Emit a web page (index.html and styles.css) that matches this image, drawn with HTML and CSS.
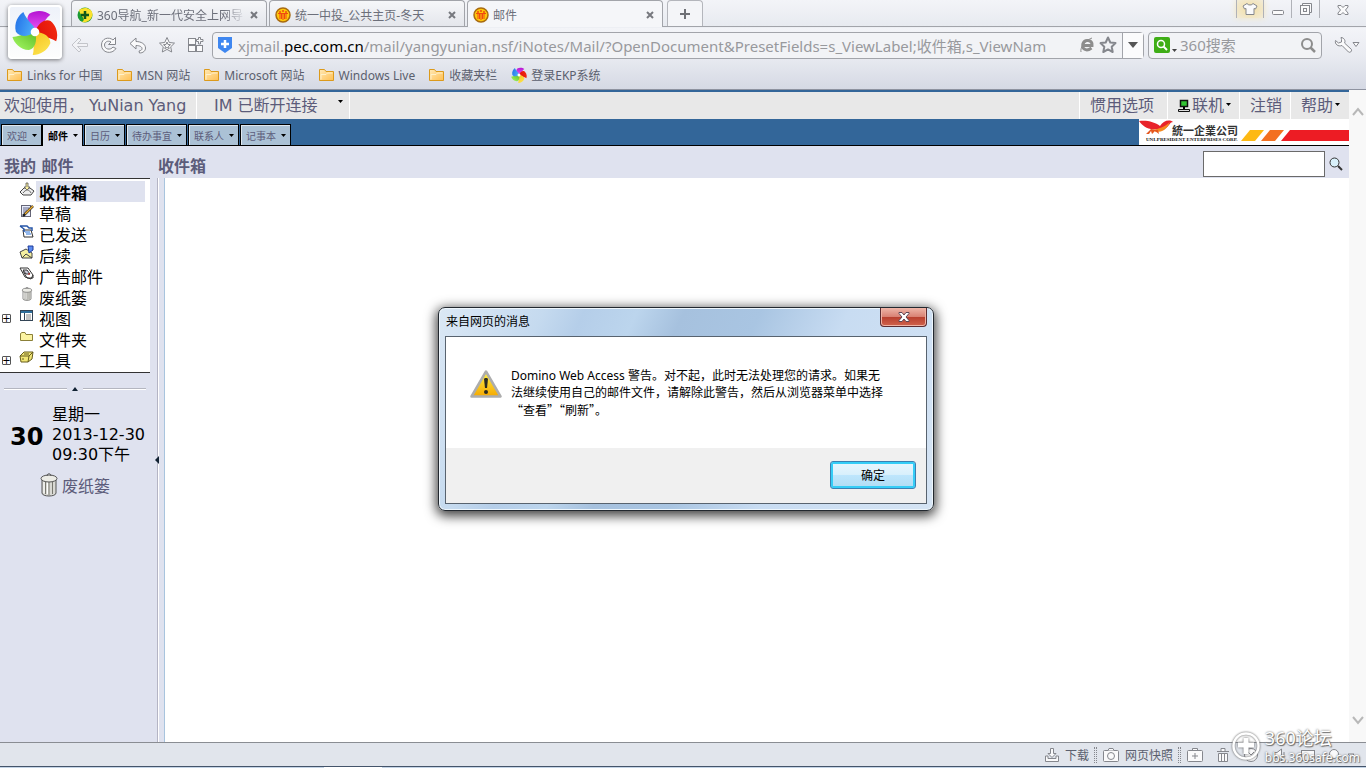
FILE: index.html
```html
<!DOCTYPE html>
<html lang="zh-CN">
<head>
  <meta charset="UTF-8">
  <meta name="viewport" content="width=device-width, initial-scale=1.0">
  <title>邮件</title>
  <link rel="stylesheet" href="styles.css">
</head>
<body>
  <!-- shared icons -->
  <svg class="defs" width="0" height="0">
    <defs>
      <path id="petal" d="M0 0C-8 -6 -10 -14 -6 -19C2 -24 11 -22 16 -18C12 -15 9 -10 5 -3Z"/>
      <linearGradient id="folderFill" x1="0" y1="0" x2="1" y2="1">
        <stop offset="0" stop-color="#ffe9b5"/><stop offset="1" stop-color="#ffbf52"/>
      </linearGradient>
      <linearGradient id="warnFill" x1="0" y1="0" x2="0" y2="1">
        <stop offset="0" stop-color="#fff34a"/><stop offset="1" stop-color="#f5a800"/>
      </linearGradient>
      <linearGradient id="purple" x1="0" y1="0" x2="0" y2="1"><stop offset="0" stop-color="#b414d2"/><stop offset="1" stop-color="#ec5cf6"/></linearGradient>
      <linearGradient id="red" x1="0" y1="0" x2="0" y2="1"><stop offset="0" stop-color="#f0260e"/><stop offset="1" stop-color="#e0100a"/></linearGradient>
      <linearGradient id="yellow" x1="0" y1="0" x2="0" y2="1"><stop offset="0" stop-color="#fbe04a"/><stop offset="1" stop-color="#f7c21e"/></linearGradient>
      <linearGradient id="green" x1="0" y1="0" x2="0" y2="1"><stop offset="0" stop-color="#96ec58"/><stop offset="1" stop-color="#62bf28"/></linearGradient>
      <linearGradient id="blue" x1="0" y1="0" x2="0" y2="1"><stop offset="0" stop-color="#2878ea"/><stop offset="1" stop-color="#4fb2fb"/></linearGradient>
      <symbol id="folder" viewBox="0 0 16 14">
        <path d="M.5 12.500V1.500H5.500L7 3.500H14.500V12.500Z" fill="url(#folderFill)" stroke="#dc9a1c"/>
        <path d="M2 11.500V6.500H7L8.500 5H13.500" fill="none" stroke="#fff0c8"/>
      </symbol>
      <symbol id="pinwheel" viewBox="-24 -24 48 48">
        <use href="#petal" fill="url(#purple)"/>
        <use href="#petal" fill="url(#red)" transform="rotate(72)"/>
        <use href="#petal" fill="url(#yellow)" transform="rotate(144)"/>
        <use href="#petal" fill="url(#green)" transform="rotate(216)"/>
        <use href="#petal" fill="url(#blue)" transform="rotate(288)"/>
        <circle r="4.500" fill="#fff"/>
      </symbol>
      <symbol id="people" viewBox="0 0 16 16">
        <circle cx="8" cy="8" r="7" fill="#ffc60a" stroke="#a86a10" stroke-width="1.500"/>
        <path d="M3 6.500H13M5 7V12M8 7V13M11 7V12M6.500 7V12M9.500 7V12" stroke="#ef4a10" fill="none"/>
        <circle cx="5" cy="5" r="1" fill="#ef4a10"/><circle cx="8" cy="4" r="1" fill="#ef4a10"/><circle cx="11" cy="5" r="1" fill="#ef4a10"/>
      </symbol>
      <symbol id="star" viewBox="0 0 18 18">
        <path d="M9 1.500L11.300 6.500L16.500 7.100L12.700 10.800L13.700 16L9 13.400L4.300 16L5.300 10.800L1.500 7.100L6.700 6.500Z" stroke-linejoin="round"/>
      </symbol>
      <symbol id="trash" viewBox="0 0 18 24">
        <path d="M2 7V20C2 24 16 24 16 20V7Z" fill="#d9d9d4" stroke="#555"/>
        <path d="M5.500 9V21M9 9V22M12.500 9V21" stroke="#77776f" fill="none"/>
        <path d="M4 9V20M7.500 9V21" stroke="#fff" fill="none"/>
        <ellipse cx="9" cy="5.500" rx="8" ry="3.500" fill="#ecece6" stroke="#555"/>
        <path d="M7 3C7 0 11 0 11 3" fill="none" stroke="#555"/>
      </symbol>
    </defs>
  </svg>

  <header class="chrome">
    <button class="logo" aria-label="360"><svg width="46" height="46"><use href="#pinwheel"/></svg></button>

    <div class="tabstrip">
      <div class="tab">
        <svg width="16" height="16" viewBox="0 0 16 16"><circle cx="8" cy="8" r="7.500" fill="#1b9a32"/><path d="M2 3C7 -1 16 1 15.500 8C14 14 9 16 5 15C10 12 3 9 2 3Z" fill="#fbe12c"/><path d="M8 4V12M4 8H12" stroke="#12571b" stroke-width="2.500"/></svg>
        <span class="tab-title faded">360导航_新一代安全上网导</span>
        <button class="tab-close" aria-label="关闭"><svg width="8" height="8"><path d="M1 1L7 7M7 1L1 7"/></svg></button>
      </div>
      <div class="tab">
        <svg width="16" height="16"><use href="#people"/></svg>
        <span class="tab-title">统一中投_公共主页-冬天</span>
        <button class="tab-close" aria-label="关闭"><svg width="8" height="8"><path d="M1 1L7 7M7 1L1 7"/></svg></button>
      </div>
      <div class="tab tab-active">
        <svg width="16" height="16"><use href="#people"/></svg>
        <span class="tab-title">邮件</span>
        <button class="tab-close" aria-label="关闭"><svg width="8" height="8"><path d="M1 1L7 7M7 1L1 7"/></svg></button>
      </div>
      <button class="tab-new" aria-label="新标签"><svg width="12" height="12"><path d="M6 1V11M1 6H11"/></svg></button>
      <div class="win-buttons">
        <button class="skin" aria-label="皮肤"><svg width="16" height="14" viewBox="0 0 16 14"><path d="M5 1.500C6 3.500 10 3.500 11 1.500L15 4L13.500 7L12 6.500V12.500H4V6.500L2.500 7L1 4Z"/></svg></button>
        <button aria-label="最小化"><svg width="12" height="14"><rect x=".5" y="8.500" width="11" height="4" rx="1"/></svg></button>
        <button aria-label="还原"><svg width="12" height="14" viewBox="0 0 12 14"><path d="M2.500 3V1.500H11.500V10.500H9.500"/><rect x=".5" y="3.500" width="9" height="9"/><rect x="3.500" y="6.500" width="3" height="3"/></svg></button>
        <button class="win-close" aria-label="关闭窗口"><svg width="12" height="14" viewBox="0 0 12 14"><path d="M1 3.500H4L6 5.500L8 3.500H11V5L8.500 8L11 11V12.500H8L6 10.500L4 12.500H1V11L3.500 8L1 5Z"/></svg></button>
      </div>
    </div>

    <div class="toolbar">
      <nav class="nav-buttons">
        <button class="disabled" aria-label="后退"><svg width="18" height="18"><path d="M8 2L1 9L8 16L10 14L6.500 10.500H16.500V7.500H6.500L10 4Z"/></svg></button>
        <button aria-label="刷新"><svg width="18" height="18"><path d="M15.500 1.500V8.500H8.500L11 6C8 4 4.500 6 4.500 9C4.500 13.500 10.500 14.500 13 11L16 12.500C12 19 1.500 17 1.500 9C1.500 2 9 .5 13 4Z"/></svg></button>
        <button aria-label="撤销"><svg width="18" height="18"><path d="M7 2L1 7.500L7 13V9.500C11 9.500 13 11 13 12.500C13 14 12 14.500 10 15L10.500 17C14 17 16.500 15 16.500 12C16.500 8 12 5.500 7 5.500Z"/></svg></button>
        <button aria-label="收藏"><svg width="18" height="18" viewBox="0 0 18 18"><use href="#star"/><path d="M9 6L10 8.500L12.500 8.700L10.500 10.300L11.200 12.700L9 11.400L6.800 12.700L7.500 10.300L5.500 8.700L8 8.500Z"/></svg></button>
        <button aria-label="应用"><svg width="18" height="18"><rect x="1.500" y="2.500" width="7" height="6"/><rect x="1.500" y="9.500" width="7" height="6"/><rect x="9.500" y="9.500" width="6" height="6"/><path d="M11.500 1.500H13.500V3.500H16V5.500H13.500V8H11.500V5.500H9.500V3.500H11.500Z"/></svg></button>
      </nav>
      <div class="address">
        <svg width="16" height="16"><path d="M1 0H15V11L8 16L1 11Z" fill="#3f87f0"/><path d="M8 3V11M4 7H12" stroke="#fff" stroke-width="2.500"/></svg>
        <a class="url" href="#">xjmail.<b>pec.com.cn</b>/mail/yangyunian.nsf/iNotes/Mail/?OpenDocument&amp;PresetFields=s_ViewLabel;收件箱,s_ViewNam</a>
        <button aria-label="兼容模式"><svg width="14" height="16" viewBox="0 0 14 16"><path d="M3 8.500H12C12.500 3 5 1.500 3 6.500C1.500 12 6 15 11.500 11" fill="none" stroke="#8d8d8d" stroke-width="3"/><path d="M1 15C0 11 4 4 12 1" stroke="#8d8d8d" fill="none"/></svg></button>
        <button class="fav" aria-label="加入收藏"><svg width="18" height="18"><use href="#star"/></svg></button>
        <button class="drop" aria-label="历史网址"><svg width="10" height="6"><path d="M0 0H10L5 6Z" fill="#555"/></svg></button>
      </div>
      <div class="search">
        <svg class="engine" width="16" height="16"><rect width="16" height="16" rx="2" fill="#3fae16"/><circle cx="7" cy="7" r="3.500" fill="none" stroke="#fff" stroke-width="1.500"/><path d="M9.500 9.500L13 13" stroke="#fff" stroke-width="2"/></svg>
        <svg class="caret" width="5" height="3"><path d="M0 0H5L2.500 3Z" fill="#444"/></svg>
        <input type="text" aria-label="360搜索" placeholder="360搜索">
        <button aria-label="搜索"><svg width="16" height="16"><circle cx="7" cy="7" r="5" fill="none" stroke="#8d8d8d" stroke-width="2"/><path d="M10.500 10.500L15 15" stroke="#8d8d8d" stroke-width="2.500"/></svg></button>
      </div>
      <button class="wrench" aria-label="工具"><svg width="26" height="18"><path d="M7 1.500C10 1.500 12 5 10.500 7L17.500 13.500C18 15.500 16 17 14.500 16L8 9.500C4 11 .5 8 1.500 4.500L4.500 7L7.500 6L7.500 3.500Z"/><path d="M19 6.500H25L22 10.500Z"/></svg></button>
    </div>

    <nav class="bookmarks">
      <a href="#"><svg width="16" height="14"><use href="#folder"/></svg>Links for 中国</a>
      <a href="#"><svg width="16" height="14"><use href="#folder"/></svg>MSN 网站</a>
      <a href="#"><svg width="16" height="14"><use href="#folder"/></svg>Microsoft 网站</a>
      <a href="#"><svg width="16" height="14"><use href="#folder"/></svg>Windows Live</a>
      <a href="#"><svg width="16" height="14"><use href="#folder"/></svg>收藏夹栏</a>
      <a href="#"><svg width="16" height="16"><use href="#pinwheel"/></svg>登录EKP系统</a>
    </nav>
  </header>

  <div class="viewport">
    <div class="inotes">
      <div class="welcome">
        <span class="hello">欢迎使用， YuNian Yang</span>
        <button class="im">IM 已断开连接<svg width="5" height="3"><path d="M0 0H5L2.500 3Z"/></svg></button>
        <span class="spacer"></span>
        <a class="pref" href="#">惯用选项</a>
        <button class="online"><svg width="12" height="14"><rect x="2.500" y="1.500" width="7" height="6" fill="#35c435" stroke="#111" stroke-width="1.500"/><path d="M5 8H7V10H5Z"/><path d="M.5 12.500V10.500H11.500V12.500Z" fill="#ddd" stroke="#111"/></svg>联机<svg class="arr" width="5" height="3"><path d="M0 0H5L2.500 3Z"/></svg></button>
        <a class="logout" href="#">注销</a>
        <button class="help">帮助<svg class="arr" width="5" height="3"><path d="M0 0H5L2.500 3Z"/></svg></button>
      </div>

      <div class="apps">
        <nav class="app-tabs">
          <button>欢迎<svg width="5" height="3"><path d="M0 0H5L2.500 3Z"/></svg></button>
          <button class="current">邮件<svg width="5" height="3"><path d="M0 0H5L2.500 3Z"/></svg></button>
          <button>日历<svg width="5" height="3"><path d="M0 0H5L2.500 3Z"/></svg></button>
          <button>待办事宜<svg width="5" height="3"><path d="M0 0H5L2.500 3Z"/></svg></button>
          <button>联系人<svg width="5" height="3"><path d="M0 0H5L2.500 3Z"/></svg></button>
          <button>记事本<svg width="5" height="3"><path d="M0 0H5L2.500 3Z"/></svg></button>
        </nav>
        <svg class="brand" width="210" height="26">
          <rect width="210" height="26" fill="#fff"/>
          <path d="M0 2C8 1 16 3 21 7C24 2 30 0 34 3C31 3 31 6 27 9C24 11 20 11 17 10C8 11 4 7 0 2Z" fill="#e8232a"/>
          <path d="M14 11C19 10 26 8 31 3C28 10 24 13 17 13Z" fill="#f58a1f"/>
          <path d="M7 15L12 10L19 11L20 15L16 12L13 15L12 12L10 15Z" fill="#e5571f"/>
          <text class="brand-cn" x="33" y="16">統一企業公司</text>
          <text class="brand-en" x="7" y="22">UNI-PRESIDENT ENTERPRISES CORP.</text>
          <path d="M102 22L111 11H125L116 22Z" fill="#fdb913"/>
          <path d="M122 22L131 11H145L136 22Z" fill="#f37021"/>
          <path d="M142 22L151 11H210V22Z" fill="#ed1c24"/>
        </svg>
      </div>

      <div class="titles">
        <h1 class="my-mail">我的 邮件</h1>
        <h2 class="folder-name">收件箱</h2>
        <form class="mail-search">
          <input type="text" aria-label="搜索邮件">
          <button type="button" aria-label="搜索"><svg width="14" height="14"><circle cx="5.500" cy="5.500" r="4.500" fill="#d8f0fa" stroke="#333"/><path d="M9 9L13 13" stroke="#333" stroke-width="2"/></svg></button>
        </form>
      </div>

      <div class="work">
        <aside class="sidebar">
          <ul class="folders">
            <li class="selected"><span class="expander"></span><svg width="16" height="16"><path d="M1 10L5 6H11L15 9L12 13H4Z" fill="#eee" stroke="#444"/><path d="M4 11C7 7 10 7 12 11" fill="none" stroke="#666"/><path d="M7 1H9V5H11L8 8L5 5H7Z" fill="#fff3a0" stroke="#555" stroke-width=".8"/></svg><a href="#">收件箱</a></li>
            <li><span class="expander"></span><svg width="16" height="16"><rect x="2.500" y="2.500" width="9" height="11" fill="#e8eefc" stroke="#667"/><path d="M4 5H10M4 7H8M4 9H7" stroke="#668"/><path d="M4 13L14 3" stroke="#222" stroke-width="2.500"/><path d="M6 11L14 3" stroke="#f0b030" stroke-width="1.500"/></svg><a href="#">草稿</a></li>
            <li><span class="expander"></span><svg width="16" height="16"><path d="M4 6H12L14 13H5Z" fill="#fff" stroke="#333"/><path d="M6 8H11M7 10H12" stroke="#2670d8"/><path d="M1 2H8L10 4H13V7M1 2L5 5V8" fill="none" stroke="#2656a8" stroke-width="1.500"/></svg><a href="#">已发送</a></li>
            <li><span class="expander"></span><svg width="16" height="16"><path d="M1 7L7 4L13 8V13H3Z" fill="#f4efa0" stroke="#444"/><path d="M3 13L7 9L13 13" fill="none" stroke="#444"/><path d="M9 1H14V5L10 8Z" fill="#5b8bf0" stroke="#1c3b9a"/></svg><a href="#">后续</a></li>
            <li><span class="expander"></span><svg width="16" height="16"><path d="M1 2H9L14 9L12 13L6 11Z" fill="#fff" stroke="#333"/><path d="M4 4H8L11 8H7Z" fill="#ccd" stroke="#333"/><path d="M4 5L8 12H14V9" fill="none" stroke="#333"/><path d="M9 8H11" stroke="#c22"/></svg><a href="#">广告邮件</a></li>
            <li><span class="expander"></span><svg width="12" height="14"><use href="#trash"/></svg><a href="#">废纸篓</a></li>
            <li><button class="expander plus" aria-label="展开">+</button><svg width="16" height="16"><rect x="1.500" y="2.500" width="12" height="10" fill="#fff" stroke="#345"/><rect x="2" y="3" width="11" height="2" fill="#2f6f9c"/><path d="M5.500 5V12" stroke="#345"/><path d="M7 7H12M7 9H12M7 11H12" stroke="#888"/></svg><a href="#">视图</a></li>
            <li><span class="expander"></span><svg width="16" height="16"><path d="M1.500 11.500V4.500L3 3.500H6L7 5.500H13.500V11.500Z" fill="#fbf3a2" stroke="#8b8038"/></svg><a href="#">文件夹</a></li>
            <li><button class="expander plus" aria-label="展开">+</button><svg width="16" height="16"><path d="M1 6L5 2H14L13 9L9 12H2Z" fill="#f1e676" stroke="#665c1c"/><path d="M1 6H10L14 2M10 6L9 12M5 4H10M3 9H5" fill="none" stroke="#665c1c"/></svg><a href="#">工具</a></li>
          </ul>

          <div class="fold"><hr><svg width="6" height="4"><path d="M3 0L6 4H0Z" fill="#123"/></svg><hr></div>

          <div class="today">
            <strong>30</strong>
            <div>星期一<br>2013-12-30<br>09:30下午</div>
          </div>

          <a class="bin" href="#"><svg width="18" height="24"><use href="#trash"/></svg>废纸篓</a>
        </aside>

        <div class="splitter"><svg width="4" height="8"><path d="M4 0V8L0 4Z" fill="#123"/></svg></div>
        <main class="mail-list"></main>
      </div>
    </div>

    <div class="scrollbar">
      <svg width="12" height="9"><path d="M1 8L6 2L11 8"/></svg>
      <svg width="12" height="9"><path d="M1 1L6 7L11 1"/></svg>
    </div>
  </div>

  <footer class="statusbar">
    <button class="download"><svg width="16" height="16"><path d="M6.500 1.500H9.500V6.500H12L8 10.500L4 6.500H6.500Z"/><path d="M1.500 9V14.500H14.500V9H12V11.500H4V9Z"/></svg>下载</button>
    <i class="grip"></i>
    <button class="snapshot"><svg width="18" height="16"><rect x="1.500" y="3.500" width="15" height="11" rx="1"/><path d="M6 3.500L7 1.500H11L12 3.500"/><circle cx="9" cy="9" r="3.500"/></svg>网页快照</button>
    <i class="grip"></i>
    <div class="tools">
      <button aria-label="修复"><svg width="18" height="16"><rect x="1.500" y="3.500" width="15" height="11" rx="1"/><path d="M6.500 3V1.500H11.500V3M9 6V12M6 9H12"/></svg></button>
      <button aria-label="清理"><svg width="14" height="16"><path d="M1 4.500H13M5 4V1.500H9V4M2.500 6.500H11.500V14.500H2.500ZM5.500 7V14M8.500 7V14"/></svg></button>
      <button aria-label="加速"><svg width="18" height="16"><circle cx="9" cy="8" r="6.500"/><path d="M6 5L9 8L12 5"/></svg></button>
      <button aria-label="静音"><svg width="16" height="16"><path d="M1.500 5.500H5L9.500 2V14L5 10.500H1.500ZM12 5V11"/></svg></button>
      <button aria-label="窗口"><svg width="16" height="16"><rect x="1.500" y="3.500" width="13" height="10"/></svg></button>
      <button aria-label="缩放"><svg width="30" height="16"><circle cx="6" cy="7" r="4.500"/><path d="M9 10L13 14M20 7H26L23 10Z"/></svg></button>
    </div>
  </footer>
  <div class="taskbar"><span></span></div>

  <div class="watermark">
    <svg width="30" height="30"><circle cx="15" cy="15" r="12.500" fill="none" stroke="#fff" stroke-width="2.500"/><path d="M15 7V23M7 14H23" stroke="#fff" stroke-width="5"/></svg>
    <div>
      <p class="forum">360论坛</p>
      <p>bbs.360safe.com</p>
    </div>
  </div>

  <section class="dialog" role="alertdialog" aria-labelledby="dlgTitle">
    <div class="dialog-title">
      <h2 id="dlgTitle">来自网页的消息</h2>
      <button class="dialog-close" aria-label="关闭"><svg width="12" height="10"><path d="M1 .5H4L6 3L8 .5H11V1.500L8 5L11 8.500V9.500H8L6 7L4 9.500H1V8.500L4 5L1 1.500Z" fill="#fff" stroke="#5c4654"/></svg></button>
    </div>
    <div class="dialog-body">
      <div class="dialog-message">
        <svg width="32" height="28"><path d="M16 1.500L30.500 26.500H1.500Z" fill="url(#warnFill)" stroke="#adadad" stroke-width="2.500" stroke-linejoin="round"/><path d="M14 9C14 7.500 18 7.500 18 9L17 18H15Z" fill="#2b2b22"/><circle cx="16" cy="22" r="2" fill="#2b2b22"/></svg>
        <p>Domino Web Access 警告。对不起，此时无法处理您的请求。如果无<br>法继续使用自己的邮件文件，请解除此警告，然后从浏览器菜单中选择<br><span class="quoted">“查看”“刷新”。</span></p>
      </div>
      <div class="dialog-actions"><button class="ok">确定</button></div>
    </div>
  </section>
</body>
</html>
```

FILE: styles.css
```css
* {
  box-sizing: border-box;
}
body {
  margin: 0;
  height: 100vh;
  display: flex;
  flex-direction: column;
  overflow: hidden;
  font-family: "Noto Sans", "Noto Sans CJK SC", sans-serif;
  font-size: 12px;
  background-color: #ffffff;
}
button {
  margin: 0;
  padding: 0;
  border: none;
  background: none;
  font: inherit;
  color: inherit;
  display: flex;
  align-items: center;
}
a {
  color: inherit;
  text-decoration: none;
}
svg {
  flex: none;
}
h1, h2, p, ul {
  margin: 0;
  padding: 0;
  font-weight: normal;
}
.defs {
  position: absolute;
}

/* Browser window */
.chrome {
  position: relative;
  flex: none;
  border-bottom: 1px solid #8e93a0;
  background: linear-gradient(#f3f4f8, #e7eaf0 27px, #f3f4f8 28px, #e9ebf1 56px, #d5d9e4);
}
.logo {
  position: absolute;
  left: 8px;
  top: 5px;
  width: 54px;
  height: 54px;
  justify-content: center;
  border: 2px solid #ffffff;
  border-radius: 4px;
  background: linear-gradient(#eef2fa, #fdfdfd);
  box-shadow: 0 1px 4px rgba(0, 0, 0, 0.5);
}
.tabstrip {
  display: flex;
  height: 27px;
  padding-left: 71px;
  border-bottom: 1px solid #a2a4aa;
}
.tab {
  display: flex;
  align-items: center;
  gap: 4px;
  width: 196px;
  height: 26px;
  margin-right: 2px;
  padding: 2px 8px 0 5px;
  border: 1px solid #a2a4aa;
  border-bottom: none;
  border-radius: 4px 4px 0 0;
  background: linear-gradient(#f6f7f9, #e4e6ec);
  color: #6c6f7a;
}
.tab-active {
  height: 27px;
  background: #f5f6f9;
}
.tab-title {
  flex: 1;
  overflow: hidden;
  white-space: nowrap;
}
.faded {
  -webkit-mask-image: linear-gradient(to right, #000 85%, transparent);
  mask-image: linear-gradient(to right, #000 85%, transparent);
}
.tab-close path {
  stroke: #77797f;
  stroke-width: 2;
}
.tab-new {
  width: 36px;
  height: 26px;
  margin-left: 2px;
  justify-content: center;
  border: 1px solid #b4b6bc;
  border-bottom: none;
  border-radius: 4px 4px 0 0;
  background: #f4f5f8;
}
.tab-new path {
  stroke: #6f7176;
  stroke-width: 2;
}
.win-buttons {
  display: flex;
  height: 18px;
  margin-left: auto;
}
.win-buttons button {
  width: 28px;
  justify-content: center;
  border-right: 1px solid #b0b2b8;
}
.win-buttons .win-close {
  width: 46px;
  border-right: none;
}
.win-buttons .skin {
  border-left: 1px solid #b0b2b8;
  background: radial-gradient(#f3dfa4, #f2ebd8);
  box-shadow: 0 0 6px #f3e6c0;
}
.win-buttons svg,
.nav-buttons svg,
.wrench svg,
.statusbar svg {
  fill: #fafafb;
  stroke: #85878d;
}
.toolbar {
  display: flex;
  align-items: center;
  height: 36px;
  padding: 0 6px 0 71px;
}
.nav-buttons {
  display: flex;
  gap: 11px;
  margin-right: 7px;
}
.disabled {
  opacity: 0.4;
}
.address,
.search {
  display: flex;
  align-items: center;
  height: 27px;
  border: 1px solid #a2a4aa;
  border-radius: 4px;
  background: #f2f3f6;
  color: #98999d;
  font-size: 15px;
}
.address {
  flex: 1;
  min-width: 0;
  margin-right: 4px;
  padding-left: 4px;
  gap: 5px;
}
.url {
  flex: 1;
  overflow: hidden;
  white-space: nowrap;
}
.url b {
  color: #000000;
  font-weight: normal;
}
.fav {
  fill: none;
  stroke: #85878d;
  stroke-width: 2;
}
.drop {
  width: 21px;
  height: 25px;
  justify-content: center;
  border-left: 1px solid #a2a4aa;
  background: #fbfbfc;
}
.search {
  width: 174px;
  padding: 0 5px;
}
.search .caret {
  margin: 10px 3px 0 2px;
}
.search input {
  flex: 1;
  min-width: 0;
  padding: 0;
  border: none;
  background: none;
  font: inherit;
}
.search input::placeholder {
  color: #98999d;
}
.wrench {
  margin-left: 12px;
}
.bookmarks {
  display: flex;
  gap: 14px;
  height: 26px;
  padding: 0 7px 2px;
  color: #5b5f6e;
}
.bookmarks a {
  display: flex;
  align-items: center;
  gap: 4px;
}

/* Mail page */
.viewport {
  flex: 1;
  min-height: 0;
  display: flex;
}
.inotes {
  flex: 1;
  display: flex;
  flex-direction: column;
  border-top: 2px solid #336699;
  background-color: #dfe2ef;
  font-family: "DejaVu Sans", "Noto Sans CJK SC", sans-serif;
  font-size: 16px;
  color: #5c5c7a;
}
.welcome {
  display: flex;
  height: 27px;
  line-height: 28px;
  background-color: #e8e8e8;
}
.welcome .spacer {
  flex: 1;
}
.hello {
  width: 197px;
  padding-left: 4px;
  white-space: nowrap;
  border-right: 1px solid #ffffff;
}
.im {
  width: 153px;
  padding: 0 6px 0 17px;
  justify-content: space-between;
  border-right: 1px solid #ffffff;
}
.im svg {
  margin-bottom: 8px;
}
.pref,
.online,
.logout,
.help {
  padding-left: 10px;
  border-left: 1px solid #ffffff;
}
.pref {
  width: 88px;
}
.online {
  width: 72px;
  gap: 2px;
}
.logout {
  width: 51px;
}
.help {
  width: 59px;
  gap: 2px;
}
.arr {
  margin-bottom: 3px;
}
.welcome svg,
.app-tabs svg {
  fill: #000000;
}
.apps {
  display: flex;
  justify-content: space-between;
  height: 27px;
  border-bottom: 1px solid #000000;
  background-color: #336699;
}
.app-tabs {
  display: flex;
  align-items: flex-end;
  gap: 1px;
  padding-left: 1px;
}
.app-tabs button {
  gap: 5px;
  height: 21px;
  padding: 0 4px 0 5px;
  border: 1px solid #000000;
  border-bottom: none;
  box-shadow: inset 1px 1px #dfe8f0;
  background-color: #abc1d5;
  font-size: 10px;
}
.app-tabs .current {
  height: 22px;
  margin: 0 0 -1px -1px;
  background-color: #dfe2ef;
  color: #000000;
  font-weight: bold;
}
.brand-cn {
  font: bold 11px "Noto Sans CJK TC", sans-serif;
  fill: #333333;
}
.brand-en {
  font: bold 5px "Liberation Serif", serif;
  fill: #111111;
}
.titles {
  display: flex;
  align-items: center;
  height: 32px;
  padding: 0 6px 0 4px;
}
.titles h1,
.titles h2 {
  padding-top: 10px;
  font-size: 16px;
  line-height: 22px;
  font-weight: bold;
}
.my-mail {
  width: 154px;
}
.mail-search {
  display: flex;
  align-items: center;
  gap: 4px;
  margin-left: auto;
  padding-top: 4px;
}
.mail-search input {
  width: 122px;
  height: 26px;
  border: 1px solid #6a6a6a;
  background-color: #ffffff;
}
.work {
  flex: 1;
  display: flex;
}
.sidebar {
  width: 157px;
  color: #000000;
}
.folders {
  width: 150px;
  padding: 2px 0;
  list-style: none;
  border-top: 1px solid #333333;
  border-bottom: 1px solid #333333;
  background-color: #ffffff;
}
.folders li {
  display: flex;
  align-items: flex-start;
  height: 21px;
  padding: 0 5px 0 2px;
  line-height: 25px;
}
.folders li svg {
  width: 16px;
  margin-top: 1px;
}
.folders a {
  flex: 1;
  height: 21px;
  margin-left: 1px;
  padding-left: 3px;
}
.folders .selected a {
  background-color: #dfe2ef;
  font-weight: bold;
}
.expander {
  flex: none;
  width: 9px;
  height: 9px;
  margin: 7px 8px 0 0;
}
.plus {
  justify-content: center;
  border: 1px solid #555555;
  border-radius: 1px;
  font-size: 10px;
  line-height: 7px;
}
.fold {
  display: flex;
  align-items: center;
  gap: 5px;
  width: 150px;
  padding: 14px 4px;
}
.fold hr {
  flex: 1;
  height: 2px;
  margin: 0;
  border: none;
  border-top: 1px solid #b4b6c0;
  background-color: #ffffff;
}
.today {
  display: flex;
  align-items: center;
  gap: 8px;
  padding-left: 10px;
  line-height: 20px;
  white-space: nowrap;
}
.today strong {
  width: 34px;
  padding-top: 4px;
  font-size: 24px;
}
.bin {
  display: flex;
  align-items: center;
  gap: 4px;
  padding: 8px 0 0 40px;
  color: #5c5c7a;
}
.splitter {
  display: flex;
  align-items: center;
  width: 8px;
  border-left: 1px solid #b4b4c4;
  border-right: 1px solid #a8c4de;
  box-shadow: inset 1px 0 #ffffff;
}
.splitter svg {
  margin-left: -3px;
}
.mail-list {
  flex: 1;
  background-color: #ffffff;
}
.scrollbar {
  display: flex;
  flex-direction: column;
  justify-content: space-between;
  align-items: center;
  width: 17px;
  padding: 17px 0;
  background-color: #f8f8f8;
}
.scrollbar svg {
  fill: none;
  stroke: #b8b8b8;
  stroke-width: 2;
}

/* Status bar */
.statusbar {
  flex: none;
  display: flex;
  align-items: center;
  justify-content: flex-end;
  gap: 8px;
  height: 24px;
  padding-right: 8px;
  border-top: 1px solid #8a8d93;
  background-color: #e1e5ec;
  color: #5b5f6e;
}
.download,
.snapshot {
  gap: 5px;
}
.tools {
  display: flex;
  gap: 12px;
}
.grip {
  width: 3px;
  height: 16px;
  margin: 0 -3px;
  border-left: 1px dotted #85878d;
  border-right: 1px dotted #85878d;
}
.taskbar {
  flex: none;
  height: 2px;
  padding-left: 324px;
  border-top: 1px solid #44546a;
  background-color: #c4d4e6;
}
.taskbar span {
  display: block;
  width: 58px;
  height: 1px;
  background-color: #ffffff;
}
.watermark {
  position: absolute;
  right: 6px;
  bottom: 2px;
  display: flex;
  align-items: center;
  gap: 4px;
  color: #ffffff;
  font-size: 12px;
  line-height: 16px;
  text-shadow: 0 0 2px #555555, 1px 1px 1px #777777;
}
.watermark svg {
  filter: drop-shadow(0 0 1px #555555);
}
.forum {
  font-size: 18px;
  line-height: 24px;
}

/* Message box */
.dialog {
  position: absolute;
  left: 438px;
  top: 307px;
  width: 496px;
  padding: 0 6px 6px;
  border: 1px solid #22282f;
  border-radius: 7px;
  background: linear-gradient(115deg, #dbe8f5, #c5daef 18%, #b5cee9 25%, #bcd5ed 34%, #a6c1de 42%, #a9c5e2 55%, #c8dcf2 70%, #d5e4f4);
  box-shadow: inset 0 0 0 1px #eef6fc, 0 3px 12px 2px rgba(0, 0, 0, 0.75);
  color: #000000;
}
.dialog-title {
  display: flex;
  justify-content: space-between;
  align-items: flex-start;
  height: 28px;
}
.dialog-title h2 {
  padding-left: 1px;
  font-size: 12px;
  line-height: 27px;
}
.dialog-close {
  width: 47px;
  height: 19px;
  justify-content: center;
  border: 1px solid #5b2c31;
  border-top: none;
  border-radius: 0 0 4px 4px;
  box-shadow: inset 0 0 0 1px #efb3a5;
  background: linear-gradient(#eeb5a8, #d98274 48%, #b83f2e 50%, #d0634d);
}
.dialog-body {
  border: 1px solid #58636f;
  background-color: #ffffff;
}
.dialog-message {
  display: flex;
  align-items: flex-start;
  gap: 9px;
  height: 111px;
  padding: 30px 0 0 24px;
  line-height: 17px;
  white-space: nowrap;
}
.dialog-message svg {
  margin-top: 3px;
}
.quoted {
  font-family: "Noto Sans CJK SC", sans-serif;
}
.dialog-actions {
  display: flex;
  justify-content: flex-end;
  padding: 13px 10px 14px;
  background-color: #f0f0f0;
}
.ok {
  width: 86px;
  height: 28px;
  justify-content: center;
  border: 1px solid #3c7fb1;
  border-radius: 3px;
  box-shadow: inset 0 0 0 2px #35cdf7;
  background: linear-gradient(#eaf6fd, #d9f0fc 48%, #bee6fd 50%, #b0dcf3);
}
```
